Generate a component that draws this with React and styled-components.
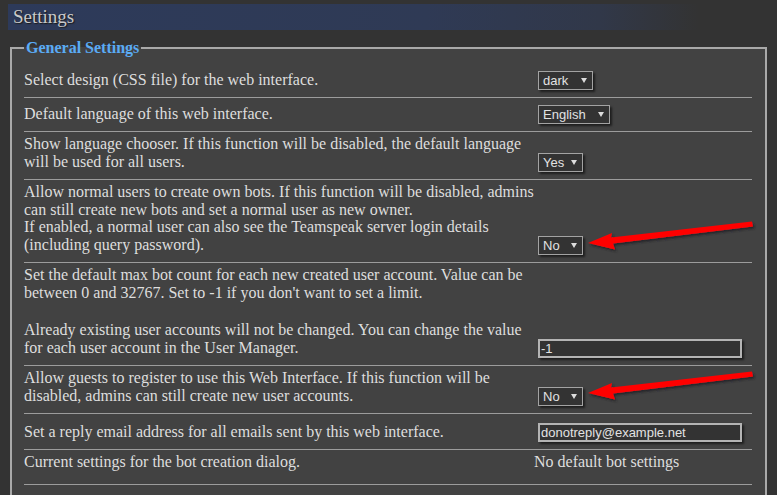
import React from "react";
import styled, { createGlobalStyle } from "styled-components";

const GlobalStyle = createGlobalStyle`
  html, body {
    margin: 0;
    padding: 0;
    background: #333333;
  }
  body {
    font-family: "Liberation Serif", "Times New Roman", serif;
    color: #dedede;
  }
`;

const Page = styled.div`
  position: relative;
  padding: 4px 10px 0 8px;
  min-height: 495px;
  box-sizing: border-box;
  overflow: hidden;
`;

const TitleBar = styled.div`
  height: 26px;
  line-height: 26px;
  padding-left: 5px;
  font-size: 19px;
  color: #c9c9c9;
  text-shadow: 1px 1px 1px #1a1a1a;
  background: linear-gradient(
    to right,
    #2d3a5a 0%,
    #2f3a55 55%,
    #313849 78%,
    #333333 91%
  );
`;

const Fieldset = styled.fieldset`
  margin: 9px 0 0 2px;
  border: 2px solid #a9a9a9;
  padding: 7px 13px 20px 12px;
  background: #424242;
  min-width: 0;
`;

const Legend = styled.legend`
  padding: 0 2px;
  color: #5aabf5;
  font-weight: bold;
  font-size: 16px;
  line-height: 18px;
`;

const Table = styled.table`
  width: 100%;
  border-collapse: collapse;
`;

const Row = styled.tr`
  border-bottom: 1px solid #9c9c9c;
`;

const TextCell = styled.td`
  width: 510px;
  padding: 3px 0 ${(p) => (p.$extra ? 13 : 9)}px;
  vertical-align: bottom;
  font-size: 16px;
  line-height: 17.5px;
`;

const ControlCell = styled.td`
  padding: 3px 0 ${(p) => (p.$extra ? 13 : 7)}px;
  vertical-align: bottom;
  font-size: 16px;
  line-height: 17.5px;
`;

const Para = styled.div`
  margin-top: ${(p) => (p.$gap ? "20px" : "0")};
`;

const Select = styled.div`
  display: flex;
  align-items: center;
  justify-content: space-between;
  box-sizing: border-box;
  width: ${(p) => p.$w}px;
  height: 19px;
  margin: 4px 0 0 4px;
  padding: 0 5px 0 4px;
  border: 1px solid #a3a3a3;
  background: #333333;
  color: #e2e2e2;
  font-family: "Liberation Sans", Arial, sans-serif;
  font-size: 13px;
  box-shadow: 2px 2px 2px rgba(0, 0, 0, 0.55);
`;

const Caret = styled.span`
  width: 0;
  height: 0;
  border-left: 3px solid transparent;
  border-right: 3px solid transparent;
  border-top: 5px solid #dcdcdc;
`;

const TextInput = styled.div`
  display: flex;
  align-items: center;
  box-sizing: border-box;
  width: 204px;
  height: 19px;
  margin: 6px 0 0 4px;
  padding: 0 1px;
  border: 2px solid #b4b4b4;
  background: #333333;
  color: #e2e2e2;
  font-family: "Liberation Sans", Arial, sans-serif;
  font-size: 13px;
  box-shadow: 2px 2px 2px rgba(0, 0, 0, 0.55);
`;

const ArrowLayer = styled.svg`
  position: absolute;
  left: 0;
  top: 0;
  pointer-events: none;
`;

const DropSelect = ({ value, w }) => (
  <Select $w={w}>
    <span>{value}</span>
    <Caret />
  </Select>
);

const arrowPoints = (dy) =>
  [
    [588, 243],
    [612, 233],
    [611, 237.5],
    [752, 221.5],
    [753, 226.5],
    [613, 243.5],
    [615, 249.5],
  ]
    .map(([x, y]) => `${x},${y + dy}`)
    .join(" ");

export default function App() {
  return (
    <>
      <GlobalStyle />
      <Page>
        <TitleBar>Settings</TitleBar>
        <Fieldset>
          <Legend>General Settings</Legend>
          <Table>
            <tbody>
              <Row>
                <TextCell>Select design (CSS file) for the web interface.</TextCell>
                <ControlCell>
                  <DropSelect value="dark" w={55} />
                </ControlCell>
              </Row>
              <Row>
                <TextCell>Default language of this web interface.</TextCell>
                <ControlCell>
                  <DropSelect value="English" w={72} />
                </ControlCell>
              </Row>
              <Row>
                <TextCell>
                  Show language chooser. If this function will be disabled, the default language
                  <br />
                  will be used for all users.
                </TextCell>
                <ControlCell>
                  <DropSelect value="Yes" w={45} />
                </ControlCell>
              </Row>
              <Row>
                <TextCell>
                  Allow normal users to create own bots. If this function will be disabled, admins
                  <br />
                  can still create new bots and set a normal user as new owner.
                  <br />
                  If enabled, a normal user can also see the Teamspeak server login details
                  <br />
                  (including query password).
                </TextCell>
                <ControlCell>
                  <DropSelect value="No" w={45} />
                </ControlCell>
              </Row>
              <Row>
                <TextCell>
                  <Para>
                    Set the default max bot count for each new created user account. Value can be
                    <br />
                    between 0 and 32767. Set to -1 if you don't want to set a limit.
                  </Para>
                  <Para $gap>
                    Already existing user accounts will not be changed. You can change the value
                    <br />
                    for each user account in the User Manager.
                  </Para>
                </TextCell>
                <ControlCell>
                  <TextInput>-1</TextInput>
                </ControlCell>
              </Row>
              <Row>
                <TextCell>
                  Allow guests to register to use this Web Interface. If this function will be
                  <br />
                  disabled, admins can still create new user accounts.
                </TextCell>
                <ControlCell>
                  <DropSelect value="No" w={45} />
                </ControlCell>
              </Row>
              <Row>
                <TextCell>Set a reply email address for all emails sent by this web interface.</TextCell>
                <ControlCell>
                  <TextInput>donotreply@example.net</TextInput>
                </ControlCell>
              </Row>
              <Row>
                <TextCell $extra>Current settings for the bot creation dialog.</TextCell>
                <ControlCell $extra>No default bot settings</ControlCell>
              </Row>
            </tbody>
          </Table>
        </Fieldset>
        <ArrowLayer width="777" height="495" viewBox="0 0 777 495">
          <defs>
            <filter id="arrowShadow" x="-10%" y="-50%" width="120%" height="200%">
              <feDropShadow dx="1.5" dy="2" stdDeviation="1" floodColor="#1e1e28" floodOpacity="0.85" />
            </filter>
          </defs>
          <polygon points={arrowPoints(0)} fill="#ff0000" filter="url(#arrowShadow)" />
          <polygon points={arrowPoints(150)} fill="#ff0000" filter="url(#arrowShadow)" />
        </ArrowLayer>
      </Page>
    </>
  );
}
